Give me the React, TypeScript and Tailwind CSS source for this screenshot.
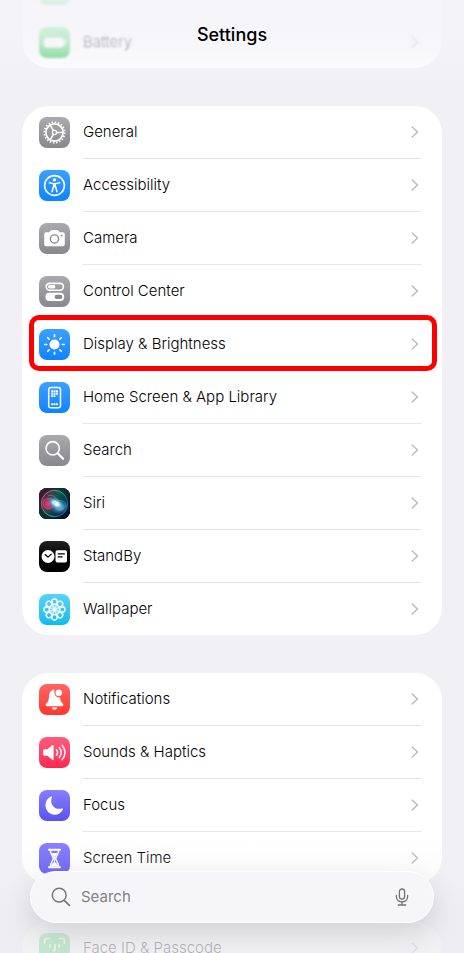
import { useState } from 'react';
import type { ReactNode } from 'react';

type Item = { label: string; icon: ReactNode; tile: string; highlighted?: boolean };

const gray = 'bg-linear-to-b from-[#a9a9ae] to-[#88888d]';
const blue = 'bg-linear-to-b from-[#3ba0ff] to-[#0a84ff]';
const green = 'bg-linear-to-b from-[#5fe07a] to-[#30c753]';

function Glyph({ children }: { children: ReactNode }) {
  return <svg viewBox="0 0 31 31" className="size-full" fill="none" aria-hidden="true">{children}</svg>;
}

const Gear = (
  <Glyph>
    <circle cx="15.5" cy="15.5" r="10.2" stroke="#fff" strokeWidth="1.8" strokeDasharray="1.5 1.7" />
    <circle cx="15.5" cy="15.5" r="8.6" stroke="#fff" strokeWidth="1.7" />
    <path d="M17.6 15.5H24M14.4 13.7L11.2 8.1M14.4 17.3L11.2 22.9" stroke="#fff" strokeWidth="1.5" />
    <circle cx="15.5" cy="15.5" r="2.1" stroke="#fff" strokeWidth="1.3" />
  </Glyph>
);

const Accessibility = (
  <Glyph>
    <circle cx="15.5" cy="15.5" r="9.9" stroke="#fff" strokeWidth="1.6" />
    <circle cx="15.5" cy="9.9" r="1.7" fill="#fff" />
    <path d="M10.4 12.8L14 13.6h3l3.6-.8" stroke="#fff" strokeWidth="1.4" strokeLinecap="round" />
    <path d="M14 13.2h3v4h-3z" fill="#fff" />
    <path d="M14.5 16.5L13 21.8M16.5 16.5L18 21.8" stroke="#fff" strokeWidth="1.5" strokeLinecap="round" />
  </Glyph>
);

const Camera = (
  <Glyph>
    <path d="M7.2 9.2h3.1l1.300-1.600c.4-.5.8-.7 1.400-.7h5c.6 0 1 .2 1.400.7l1.300 1.600h3.100c1.200 0 2 .8 2 2v10c0 1.200-.8 2-2 2H7.200c-1.200 0-2-.8-2-2v-10c0-1.200.8-2 2-2z" fill="#fff" />
    <circle cx="15.5" cy="15.9" r="4.1" stroke="#88888d" strokeWidth="1.3" />
    <circle cx="22.6" cy="12.5" r=".9" fill="#88888d" />
  </Glyph>
);

const Toggles = (
  <Glyph>
    <rect x="7.2" y="7.4" width="17.2" height="6.800" rx="3.4" stroke="#fff" strokeWidth="1.6" />
    <rect x="9" y="9.100" width="7.400" height="3.400" rx="1.700" fill="#fff" />
    <rect x="6.400" y="16.800" width="18.800" height="8.200" rx="4.100" fill="#fff" />
    <rect x="15.600" y="18.800" width="7.800" height="4.200" rx="2.100" fill="#88888d" />
  </Glyph>
);

const Sun = (
  <Glyph>
    <circle cx="15.5" cy="15.5" r="5" fill="#fff" />
    <path d="M15.5 5.800v1.900M15.5 23.300v1.900M5.800 15.500h1.900M23.300 15.500h1.900M8.700 8.700l1.400 1.400M20.900 20.900l1.400 1.400M22.300 8.700l-1.400 1.400M10.100 20.900l-1.400 1.400" stroke="#fff" strokeWidth="1.600" strokeLinecap="round" />
  </Glyph>
);

const Phone = (
  <Glyph>
    <rect x="9.700" y="5.500" width="11.800" height="20.200" rx="2.300" stroke="#fff" strokeWidth="1.500" />
    <path d="M12.200 9.300h6.800M12.200 11.700h6.800M12.200 14.100h4.200M12.200 22.200h6.800" stroke="#fff" strokeWidth="1.900" strokeDasharray="1.900 .5" />
  </Glyph>
);

const Magnifier = (
  <Glyph>
    <circle cx="13.700" cy="13.300" r="6.700" stroke="#fff" strokeWidth="1.600" />
    <path d="M18.700 18.300l5.300 5.300" stroke="#fff" strokeWidth="2.200" strokeLinecap="round" />
  </Glyph>
);

const Siri = (
  <Glyph>
    <defs>
      <linearGradient id="siriBack" x1="0" y1="0" x2="1" y2=".9">
        <stop offset="0" stopColor="#7d1640" />
        <stop offset=".45" stopColor="#0d5a4b" />
        <stop offset="1" stopColor="#070f52" />
      </linearGradient>
      <linearGradient id="siriRing" x1="0" y1="0" x2="1" y2=".3">
        <stop offset="0" stopColor="#f04a76" />
        <stop offset=".6" stopColor="#39b88f" />
        <stop offset="1" stopColor="#176f91" />
      </linearGradient>
      <radialGradient id="siriGlow">
        <stop offset="0" stopColor="#fff" />
        <stop offset=".3" stopColor="#d8fbff" />
        <stop offset=".6" stopColor="#44acd5" stopOpacity=".75" />
        <stop offset="1" stopColor="#197abe" stopOpacity="0" />
      </radialGradient>
      <radialGradient id="siriPink">
        <stop offset="0" stopColor="#e8487a" />
        <stop offset=".6" stopColor="#cb245b" stopOpacity=".8" />
        <stop offset="1" stopColor="#a01450" stopOpacity="0" />
      </radialGradient>
    </defs>
    <rect width="31" height="31" fill="#030409" />
    <rect width="31" height="31" fill="url(#siriBack)" opacity=".6" />
    <circle cx="15.5" cy="15.5" r="13" fill="url(#siriBack)" />
    <circle cx="15.5" cy="15.5" r="13.2" stroke="url(#siriRing)" strokeWidth="1" />
    <ellipse cx="9.5" cy="16" rx="8" ry="8" fill="url(#siriPink)" />
    <ellipse cx="20.5" cy="19" rx="10" ry="8" fill="url(#siriGlow)" opacity=".55" />
    <ellipse cx="17" cy="15.5" rx="10" ry="6" fill="url(#siriGlow)" transform="rotate(30 17 15.5)" />
    <path d="M9 8c5-3 10 3 14 13" stroke="#efa0bc" strokeWidth=".7" opacity=".6" />
    <ellipse cx="21" cy="17" rx="6" ry="4.500" stroke="#67bfd8" strokeWidth=".6" opacity=".7" />
    <ellipse cx="9.500" cy="15.500" rx="5.500" ry="5" stroke="#f48aa9" strokeWidth=".6" opacity=".6" />
  </Glyph>
);

const StandBy = (
  <Glyph>
    <circle cx="9" cy="15.500" r="6.500" fill="#fff" />
    <path d="M6.300 13.700L9 16.100l3.200-3" stroke="#000" strokeWidth="1.300" strokeLinecap="round" strokeLinejoin="round" />
    <rect x="16.500" y="9.300" width="11.500" height="12.300" rx="1.800" fill="#fff" />
    <path d="M18.700 12.900h7.100M18.700 15.800h4.900" stroke="#000" strokeWidth="1.300" />
  </Glyph>
);

const Flower = (
  <Glyph>
    {[0, 45, 90, 135, 180, 225, 270, 315].map(a => (
      <g key={a} transform={`rotate(${a} 15.5 15.5)`}>
        <circle cx="15.5" cy="7.700" r="2.700" stroke="#fff" strokeWidth="1.400" />
        <path d="M15.500 14.500l-1.700-4.300M15.500 14.500l1.700-4.300" stroke="#fff" strokeWidth=".8" />
      </g>
    ))}
    <circle cx="15.5" cy="15.5" r="1.600" fill="#fff" />
  </Glyph>
);

const Bell = (
  <Glyph>
    <path d="M15.400 5.400C11.500 6 10.200 8.800 10 12.500c-.2 3.800-.8 5-2.500 6.800-.7.800-.8 1.200-.8 1.800 0 .7.500 1.200 1.300 1.200h15c.8 0 1.300-.5 1.300-1.200 0-.6-.1-1-.8-1.800-1.500-1.600-2.200-2.700-2.400-5.800-3.600.3-6.200-3-5.700-8.100z" fill="#fff" />
    <path d="M12.700 23.500h5.600c-.4 1.400-1.500 2.100-2.800 2.100s-2.400-.7-2.800-2.100z" fill="#fff" />
    <circle cx="19.700" cy="8.800" r="4.300" fill="#ff5a54" />
    <circle cx="19.700" cy="8.800" r="3.200" fill="#fff" />
  </Glyph>
);

const Speaker = (
  <Glyph>
    <path d="M5.800 12.300h2.700l4.400-3.900c.8-.7 1.700-.4 1.700.7v12.800c0 1.100-.9 1.400-1.700.7l-4.400-3.900H5.800c-1.100 0-1.700-.6-1.700-1.700v-3c0-1.100.6-1.700 1.700-1.700z" fill="#fff" />
    <path d="M17.400 12.700c1.300 1.600 1.300 4 0 5.600M20.300 10.500c2.500 2.900 2.500 7.100 0 10M23.200 8.400c3.700 4.200 3.700 10 0 14.200" stroke="#fff" strokeWidth="1.500" strokeLinecap="round" />
  </Glyph>
);

const Moon = (
  <Glyph>
    <path d="M12 6.500c.6-.3 1.200.2.900.9-2.600 6.200 2.300 12.900 10 11.100.9-.2 1.400.3 1 1C22 23 19.200 24.700 15.800 24.700c-5.300 0-9.300-4-9.300-9.100 0-4.100 2.200-7.600 5.500-9.100z" fill="#fff" />
  </Glyph>
);

const Hourglass = (
  <Glyph>
    <path d="M10 6.700h11M10 24.300h11" stroke="#fff" strokeWidth="2" strokeLinecap="round" />
    <path d="M11.300 7c0 4.600 3 6 3 8.500s-3 3.900-3 8.500M19.700 7c0 4.600-3 6-3 8.500s3 3.900 3 8.500" stroke="#fff" strokeWidth="1.500" />
    <path d="M12.500 10h6c-.6 1.700-2.300 2.800-2.600 4.800V19c1.300 1 2.700 2 3.200 4.500h-7.200c.5-2.500 1.900-3.500 3.200-4.500v-4.200c-.3-2-2-3.100-2.600-4.800z" fill="#fff" />
  </Glyph>
);

const Face = (
  <Glyph>
    <path d="M5.500 10.500V8c0-1.600.9-2.500 2.500-2.500h2.500M20.500 5.500H23c1.600 0 2.500.9 2.500 2.500v2.500M5.500 20.500V23c0 1.600.9 2.500 2.500 2.500h2.500M20.500 25.500H23c1.600 0 2.500-.9 2.500-2.500v-2.500M11 11.500v2.500M20 11.500v2.500M16 11.500v5c0 .7-.3 1-1.200 1M11.500 20.500c2.200 2 5.800 2 8 0" stroke="#fff" strokeWidth="1.600" strokeLinecap="round" />
  </Glyph>
);

const Battery = (
  <Glyph>
    <rect x="5" y="10.500" width="19.500" height="10" rx="3" fill="#fff" />
    <path d="M26 13.500v4" stroke="#fff" strokeWidth="1.500" strokeLinecap="round" />
  </Glyph>
);

const mainItems: Item[] = [
  { label: 'General', icon: Gear, tile: gray },
  { label: 'Accessibility', icon: Accessibility, tile: blue },
  { label: 'Camera', icon: Camera, tile: gray },
  { label: 'Control Center', icon: Toggles, tile: gray },
  { label: 'Display & Brightness', icon: Sun, tile: blue, highlighted: true },
  { label: 'Home Screen & App Library', icon: Phone, tile: blue },
  { label: 'Search', icon: Magnifier, tile: gray },
  { label: 'Siri', icon: Siri, tile: 'bg-black' },
  { label: 'StandBy', icon: StandBy, tile: 'bg-linear-to-b from-[#222222] to-black' },
  { label: 'Wallpaper', icon: Flower, tile: 'bg-linear-to-b from-[#55d3f7] to-[#00bdeb]' },
];

const alertItems: Item[] = [
  { label: 'Notifications', icon: Bell, tile: 'bg-linear-to-b from-[#ff655f] to-[#ff3530]' },
  { label: 'Sounds & Haptics', icon: Speaker, tile: 'bg-linear-to-b from-[#ff5b7c] to-[#ff2552]' },
  { label: 'Focus', icon: Moon, tile: 'bg-linear-to-b from-[#877fff] to-[#5b50f2]' },
  { label: 'Screen Time', icon: Hourglass, tile: 'bg-linear-to-b from-[#877fff] to-[#5b50f2]' },
];

function Row({ item, last }: { item: Item; last: boolean }) {
  return (
    <li className="relative">
      <button type="button" className="flex w-full items-stretch gap-[13px] pl-[17px] pr-[21px] text-left">
        <span className={`mt-[11px] size-[31px] shrink-0 overflow-hidden rounded-lg ${last ? 'mb-[10px]' : 'mb-[11px]'} ${item.tile}`}>{item.icon}</span>
        <span className={`flex flex-1 items-center justify-between pr-[2px] ${last ? '' : 'border-b border-[#e4e4e6]'}`}>
          <span className="text-[15px] font-light leading-5 text-black">{item.label}</span>
          <svg viewBox="0 0 8 12" className="h-3 w-2" fill="none" aria-hidden="true">
            <path d="M1.200 1l5.300 5-5.300 5" stroke="#bcbcc0" strokeWidth="1.500" strokeLinecap="round" strokeLinejoin="round" />
          </svg>
        </span>
      </button>
      {item.highlighted && (
        <span className="pointer-events-none absolute -top-[3px] bottom-0 left-[7px] right-[5px] z-10 rounded-[10px] border-5 border-[#ff0000]" />
      )}
    </li>
  );
}

function Group({ items }: { items: Item[] }) {
  return (
    <ul className="rounded-[27px] bg-white">
      {items.map((item, i) => <Row key={item.label} item={item} last={i === items.length - 1} />)}
    </ul>
  );
}

export default function App() {
  const [query, setQuery] = useState('');

  return (
    <div className="relative h-screen overflow-hidden bg-[#f0f0f5] font-['Inter','Liberation_Sans',sans-serif]">
      <main className="-mt-[37px] flex flex-col gap-[38px] px-[22px]">
        <ul className="rounded-[27px] bg-white">
          <li className="flex h-[53px] pl-[17px]">
            <span className={`my-[11px] size-[31px] rounded-lg blur-[1px] ${green}`} />
          </li>
          <li className="blur-[1px]">
            <ul><Row item={{ label: 'Battery', icon: Battery, tile: green }} last /></ul>
          </li>
        </ul>
        <Group items={mainItems} />
        <Group items={alertItems} />
        <Group items={[{ label: 'Face ID & Passcode', icon: Face, tile: green }]} />
      </main>

      <header className="absolute inset-x-0 top-0 z-20 flex h-[106px] items-start justify-center bg-linear-to-b from-[#f3f3f8]/90 from-0% via-[#f3f3f8]/70 via-40% to-[#f3f3f8]/0 to-90% pt-[23px]">
        <h1 className="text-[18px] font-medium leading-6 text-black">Settings</h1>
      </header>

      <footer className="absolute inset-x-0 bottom-0 z-20 bg-linear-to-b from-[#ececf0]/0 from-0% via-[#ececf0]/20 via-35% to-[#ececf0]/75 to-75% px-[30px] pb-[30px] pt-[31px]">
        <label className="flex h-[52px] items-center gap-[10px] rounded-full border border-white bg-[#f6f6f8] pl-5 pr-6 shadow-[0_10px_28px_rgba(0,0,0,0.13)]">
          <svg viewBox="0 0 20 20" className="size-5 shrink-0" fill="none" aria-hidden="true">
            <circle cx="8.200" cy="8.200" r="6.900" stroke="#77777b" strokeWidth="1.500" />
            <path d="M13.300 13.300l5 5" stroke="#77777b" strokeWidth="1.700" strokeLinecap="round" />
          </svg>
          <input
            type="text"
            aria-label="Search"
            placeholder="Search"
            value={query}
            onChange={e => setQuery(e.target.value)}
            className="min-w-0 flex-1 bg-transparent text-[15px] leading-5 text-black outline-none placeholder:text-[#818186]"
          />
          <button type="button" aria-label="Dictate">
            <svg viewBox="0 0 14 18" className="h-[18px] w-[14px]" fill="none" stroke="#737377" strokeWidth="1.300" strokeLinecap="round" aria-hidden="true">
              <rect x="4.400" y="1" width="5.200" height="10.200" rx="2.600" />
              <path d="M1.400 7.500v1.300c0 3 2.400 5 5.600 5s5.600-2 5.600-5V7.500M7 13.800V17M3.200 17h7.600" />
            </svg>
          </button>
        </label>
      </footer>
    </div>
  );
}
